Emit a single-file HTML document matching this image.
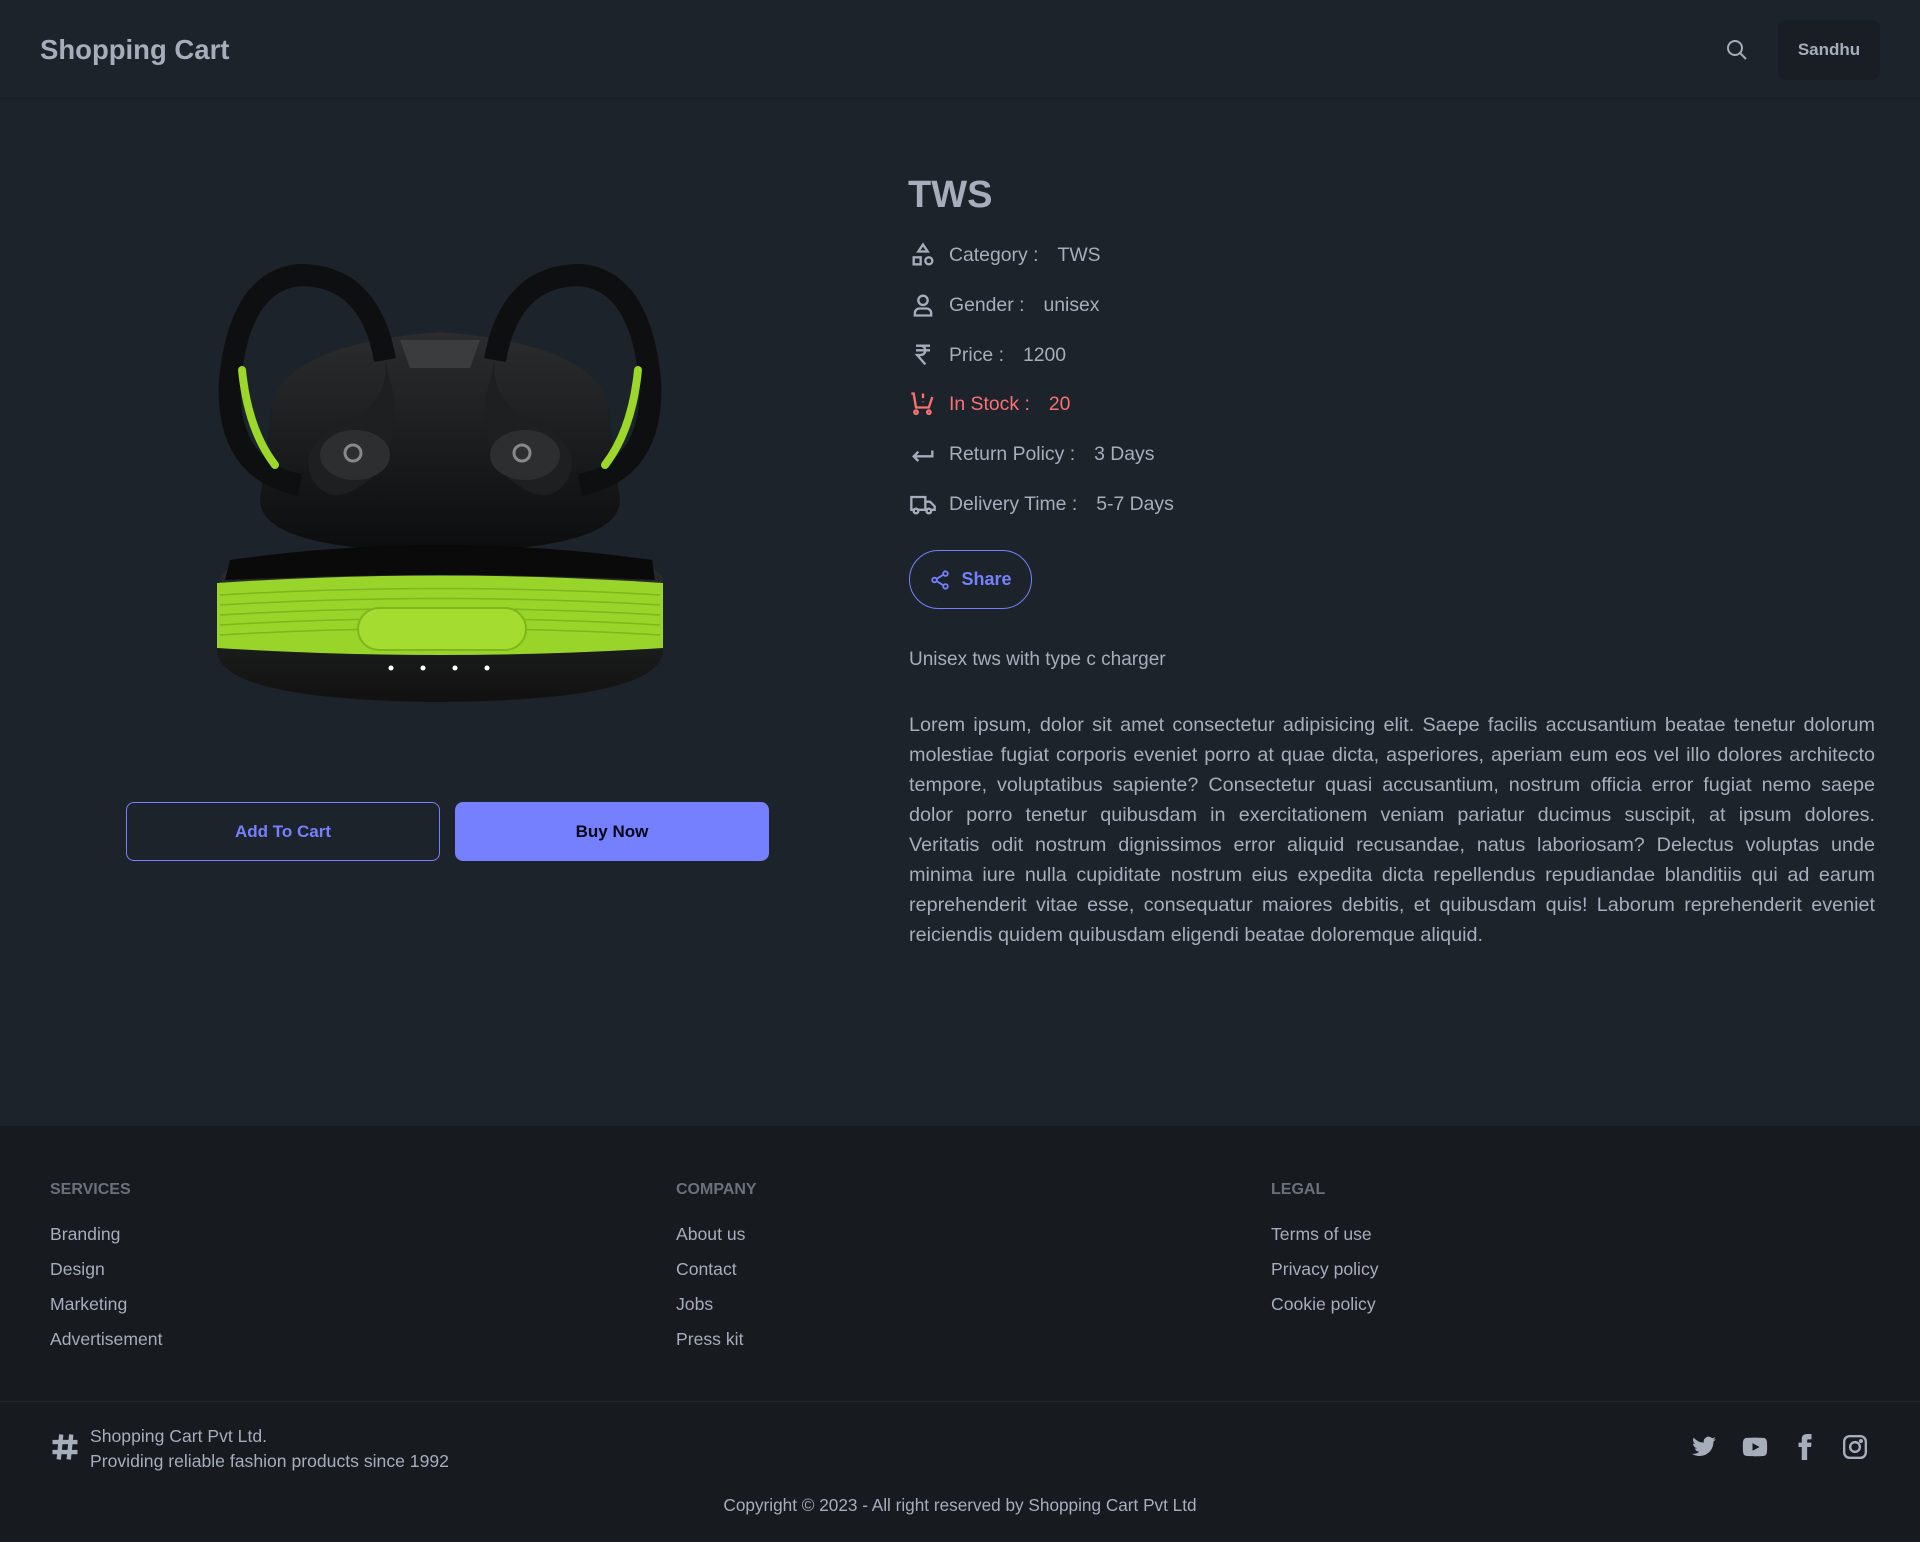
<!DOCTYPE html>
<html><head><meta charset="utf-8"><style>
*{margin:0;padding:0;box-sizing:border-box}
body{width:1920px;height:1542px;background:#1d232a;font-family:"Liberation Sans",sans-serif;color:#a6adbb;position:relative;overflow:hidden}
.abs{position:absolute}
header{position:absolute;left:0;top:0;width:1920px;height:99px;border-bottom:1px solid #191e24;background:#1d232a}
.row{position:absolute;left:909px;font-size:19.4px;display:flex;align-items:center;height:30px}
.row svg{width:28px;height:28px;margin-right:12px}
.row .v{margin-left:19px}
footer{position:absolute;left:0;top:1126px;width:1920px;height:416px;background:#171a1f}
.fh{position:absolute;top:1181px;font-size:16px;font-weight:bold;color:#6b717c}
.fl{position:absolute;font-size:17.6px;color:#a6adbb}
.para div{text-align:justify;text-align-last:justify;white-space:nowrap}
.para div:last-child{text-align-last:left}
</style></head><body>
<header>
<div class="abs" style="left:40px;top:34px;font-size:27.5px;font-weight:bold;color:#a6adbb">Shopping Cart</div>
<svg class="abs" style="left:1725px;top:38px" width="24" height="24" viewBox="0 0 24 24" fill="none" stroke="#a6adbb" stroke-width="2"><circle cx="10" cy="10" r="7"/><path d="M15 15l6 6"/></svg>
<div class="abs" style="left:1778px;top:20px;width:102px;height:60px;background:#191e24;border-radius:8px;font-size:17px;font-weight:bold;text-align:center;line-height:60px">Sandhu</div>
</header>

<svg class="abs" style="left:200px;top:250px" width="480" height="470" viewBox="0 0 480 470">
<defs><linearGradient id="lid" x1="0" y1="0" x2="0" y2="1"><stop offset="0" stop-color="#2a2c2e"/><stop offset="1" stop-color="#0c0d0e"/></linearGradient>
<linearGradient id="base" x1="0" y1="0" x2="0" y2="1"><stop offset="0" stop-color="#2c2e30"/><stop offset="1" stop-color="#111"/></linearGradient></defs>
<path d="M70 170 Q70 95 240 82 Q410 95 410 170 L420 250 Q420 300 240 302 Q60 300 60 250 Z" fill="url(#lid)"/>
<path d="M200 90 L280 90 L270 118 L210 118Z" fill="#3a3c3e"/>
<path d="M20 330 Q20 300 240 298 Q460 300 463 330 L463 400 Q463 450 240 452 Q17 450 17 400 Z" fill="url(#base)"/>
<path d="M30 310 Q240 280 452 310 L455 330 Q240 320 25 330Z" fill="#0a0a0a"/>
<path d="M17 333 Q240 318 463 333 L463 398 Q240 412 17 398Z" fill="#98d42a"/>
<g stroke="#7fb61c" stroke-width="1.5" fill="none"><path d="M20 345 Q240 332 460 345"/><path d="M20 355 Q240 342 460 355"/><path d="M20 365 Q240 352 460 365"/><path d="M20 375 Q240 362 460 375"/><path d="M20 385 Q240 372 460 385"/></g>
<rect x="158" y="358" width="168" height="42" rx="21" fill="#a5dc30" stroke="#7fb61c" stroke-width="2"/>
<g fill="#fff"><circle cx="191" cy="418" r="2.5"/><circle cx="223" cy="418" r="2.5"/><circle cx="255" cy="418" r="2.5"/><circle cx="287" cy="418" r="2.5"/></g>
<path d="M100 235 Q25 220 30 130 Q40 30 100 25 Q170 25 185 110" fill="none" stroke="#0e0f10" stroke-width="22"/>
<path d="M380 235 Q455 220 450 130 Q440 30 380 25 Q310 25 295 110" fill="none" stroke="#0e0f10" stroke-width="22"/>
<path d="M42 120 Q48 180 75 215" stroke="#9bd82a" stroke-width="8" fill="none" stroke-linecap="round"/>
<path d="M438 120 Q432 180 405 215" stroke="#9bd82a" stroke-width="8" fill="none" stroke-linecap="round"/>
<path d="M185 110 Q190 150 150 170 Q100 190 110 225 Q130 265 175 225 Q195 200 195 150Z" fill="#1d1f21"/>
<path d="M295 110 Q290 150 330 170 Q380 190 370 225 Q350 265 305 225 Q285 200 285 150Z" fill="#1d1f21"/>
<ellipse cx="155" cy="205" rx="35" ry="25" fill="#2c2e30"/><ellipse cx="325" cy="205" rx="35" ry="25" fill="#2c2e30"/>
<circle cx="153" cy="203" r="8" fill="none" stroke="#888" stroke-width="3"/><circle cx="322" cy="203" r="8" fill="none" stroke="#888" stroke-width="3"/>
</svg>

<div class="abs" style="left:126px;top:802px;width:314px;height:59px;border:1px solid #7480ff;border-radius:8px;color:#7480ff;font-weight:bold;font-size:17px;text-align:center;line-height:57px">Add To Cart</div>
<div class="abs" style="left:455px;top:802px;width:314px;height:59px;background:#7480ff;border-radius:8px;color:#050617;font-weight:bold;font-size:17px;text-align:center;line-height:59px">Buy Now</div>

<div class="abs" style="left:908px;top:174px;font-size:38px;font-weight:bold">TWS</div>
<div class="row" style="top:240px"><svg viewBox="0 0 24 24" fill="none" stroke="#a6adbb" stroke-width="2"><path d="M12 3l4 6H8z"/><rect x="4" y="14" width="6" height="6"/><circle cx="17" cy="17" r="3"/></svg>Category :<span class="v">TWS</span></div>
<div class="row" style="top:290px"><svg viewBox="0 0 24 24" fill="none" stroke="#a6adbb" stroke-width="2"><circle cx="12" cy="8" r="4"/><path d="M5 21v-2a4 4 0 014-4h6a4 4 0 014 4v2z"/></svg>Gender :<span class="v">unisex</span></div>
<div class="row" style="top:340px"><svg viewBox="0 0 24 24" fill="none" stroke="#a6adbb" stroke-width="2"><path d="M6 4h12M6 8h12M7 4h3a4 4 0 010 8H7l7 8"/></svg>Price :<span class="v">1200</span></div>
<div class="row" style="top:389px;color:#f87272"><svg viewBox="0 0 24 24" fill="none" stroke="#f87272" stroke-width="2"><circle cx="6" cy="19" r="1.5"/><circle cx="17" cy="19" r="1.5"/><path d="M2 3h2l2 12h11l3-9M12 3v4M12 10v.5"/></svg>In Stock :<span class="v">20</span></div>
<div class="row" style="top:439px"><svg viewBox="0 0 24 24" fill="none" stroke="#a6adbb" stroke-width="2"><path d="M20 9v5H4M8 10l-4 4 4 4"/></svg>Return Policy :<span class="v">3 Days</span></div>
<div class="row" style="top:489px"><svg viewBox="0 0 24 24" fill="none" stroke="#a6adbb" stroke-width="2"><path d="M2 6h12v11H2zM14 10h4l4 4v3h-8"/><circle cx="6" cy="18" r="2" fill="#1d232a"/><circle cx="17" cy="18" r="2" fill="#1d232a"/></svg>Delivery Time :<span class="v">5-7 Days</span></div>

<div class="abs" style="left:909px;top:550px;width:123px;height:59px;border:1.5px solid #7480ff;border-radius:30px;color:#7480ff;font-weight:bold;font-size:18px;display:flex;align-items:center;justify-content:center"><svg width="22" height="22" viewBox="0 0 24 24" fill="none" stroke="#7480ff" stroke-width="2" style="margin-right:10px"><circle cx="18" cy="5" r="2.5"/><circle cx="6" cy="12" r="2.5"/><circle cx="18" cy="19" r="2.5"/><path d="M8 11l8-5M8 13l8 5"/></svg>Share</div>

<div class="abs" style="left:909px;top:649px;font-size:19px">Unisex tws with type c charger</div>
<div class="abs para" style="left:909px;top:710px;width:966px;font-size:19.8px;line-height:30px">
<div>Lorem ipsum, dolor sit amet consectetur adipisicing elit. Saepe facilis accusantium beatae tenetur dolorum</div>
<div>molestiae fugiat corporis eveniet porro at quae dicta, asperiores, aperiam eum eos vel illo dolores architecto</div>
<div>tempore, voluptatibus sapiente? Consectetur quasi accusantium, nostrum officia error fugiat nemo saepe</div>
<div>dolor porro tenetur quibusdam in exercitationem veniam pariatur ducimus suscipit, at ipsum dolores.</div>
<div>Veritatis odit nostrum dignissimos error aliquid recusandae, natus laboriosam? Delectus voluptas unde</div>
<div>minima iure nulla cupiditate nostrum eius expedita dicta repellendus repudiandae blanditiis qui ad earum</div>
<div>reprehenderit vitae esse, consequatur maiores debitis, et quibusdam quis! Laborum reprehenderit eveniet</div>
<div>reiciendis quidem quibusdam eligendi beatae doloremque aliquid.</div>
</div>

<footer></footer>
<div class="fh" style="left:50px">SERVICES</div>
<div class="fh" style="left:676px">COMPANY</div>
<div class="fh" style="left:1271px">LEGAL</div>
<div class="fl" style="left:50px;top:1224px">Branding</div>
<div class="fl" style="left:50px;top:1259px">Design</div>
<div class="fl" style="left:50px;top:1294px">Marketing</div>
<div class="fl" style="left:50px;top:1329px">Advertisement</div>
<div class="fl" style="left:676px;top:1224px">About us</div>
<div class="fl" style="left:676px;top:1259px">Contact</div>
<div class="fl" style="left:676px;top:1294px">Jobs</div>
<div class="fl" style="left:676px;top:1329px">Press kit</div>
<div class="fl" style="left:1271px;top:1224px">Terms of use</div>
<div class="fl" style="left:1271px;top:1259px">Privacy policy</div>
<div class="fl" style="left:1271px;top:1294px">Cookie policy</div>
<div class="abs" style="left:0;top:1401px;width:1920px;height:1px;background:#23272e"></div>
<svg class="abs" style="left:50px;top:1432px" width="30" height="30" viewBox="0 0 24 24" fill="none" stroke="#a6adbb" stroke-width="3.5"><path d="M9 2l-2 20M17 2l-2 20M2 8h20M2 16h20"/></svg>
<div class="fl" style="left:90px;top:1424px;line-height:25px">Shopping Cart Pvt Ltd.<br>Providing reliable fashion products since 1992</div>
<svg class="abs" style="left:1690px;top:1434px" width="28" height="26" viewBox="0 0 24 24" fill="#a6adbb"><path d="M23 4.6a9 9 0 01-2.6.7 4.6 4.6 0 002-2.5 9 9 0 01-2.9 1.1A4.5 4.5 0 0011.8 8 12.8 12.8 0 012.5 3.3a4.5 4.5 0 001.4 6 4.5 4.5 0 01-2-.6 4.5 4.5 0 003.6 4.5 4.5 4.5 0 01-2 .1 4.5 4.5 0 004.2 3.1A9 9 0 011 18.3a12.8 12.8 0 006.9 2c8.3 0 12.8-6.9 12.8-12.8v-.6A9 9 0 0023 4.6z"/></svg>
<svg class="abs" style="left:1739px;top:1434px" width="32" height="26" viewBox="0 0 24 24" fill="#a6adbb"><path d="M23 7s-.2-1.7-1-2.4c-.9-1-1.9-1-2.4-1C16.2 3.3 12 3.3 12 3.3s-4.2 0-7.6.3c-.5 0-1.5 0-2.4 1C1.2 5.3 1 7 1 7S.8 9 .8 11v1.9c0 2 .2 4 .2 4s.2 1.7 1 2.4c.9 1 2.1.9 2.6 1 1.9.2 7.4.3 7.4.3s4.2 0 7.6-.3c.5 0 1.5 0 2.4-1 .8-.7 1-2.4 1-2.4s.2-2 .2-4V11c0-2-.2-4-.2-4zM9.7 15.5V8.4l6.5 3.6z"/></svg>
<svg class="abs" style="left:1792px;top:1432px" width="26" height="30" viewBox="0 0 24 24" fill="#a6adbb"><path d="M9 8H6v4h3v12h5V12h3.6l.4-4h-4V6.3c0-1 .2-1.3 1.1-1.3H18V0h-3.8C10.6 0 9 1.6 9 4.6z"/></svg>
<svg class="abs" style="left:1842px;top:1434px" width="26" height="26" viewBox="0 0 24 24" fill="none" stroke="#a6adbb" stroke-width="2.2"><rect x="2" y="2" width="20" height="20" rx="5"/><circle cx="12" cy="12" r="4.5"/><circle cx="17.5" cy="6.5" r=".8" fill="#a6adbb"/></svg>
<div class="fl" style="left:0;width:1920px;text-align:center;top:1495px;font-size:17.2px">Copyright © 2023 - All right reserved by Shopping Cart Pvt Ltd</div>
</body></html>
